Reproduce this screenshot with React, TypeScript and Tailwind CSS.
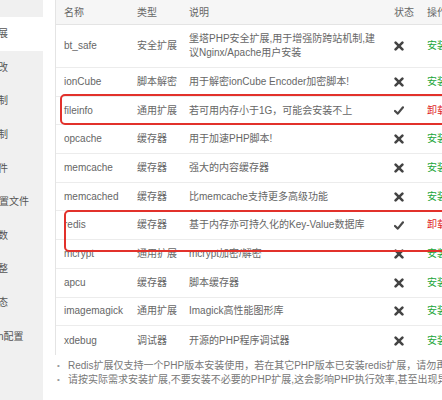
const MENU = [
  "安装扩展",
  "配置修改",
  "上传限制",
  "超时限制",
  "配置文件",
  "FPM配置文件",
  "禁用函数",
  "性能调整",
  "负载状态",
  "Session配置",
];

type Ext = {
  name: string;
  type: string;
  desc: string;
  installed: boolean;
};

const EXTS: Ext[] = [
  { name: "bt_safe", type: "安全扩展", desc: "堡塔PHP安全扩展,用于增强防跨站机制,建议Nginx/Apache用户安装", installed: false },
  { name: "ionCube", type: "脚本解密", desc: "用于解密ionCube Encoder加密脚本!", installed: false },
  { name: "fileinfo", type: "通用扩展", desc: "若可用内存小于1G，可能会安装不上", installed: true },
  { name: "opcache", type: "缓存器", desc: "用于加速PHP脚本!", installed: false },
  { name: "memcache", type: "缓存器", desc: "强大的内容缓存器", installed: false },
  { name: "memcached", type: "缓存器", desc: "比memcache支持更多高级功能", installed: false },
  { name: "redis", type: "缓存器", desc: "基于内存亦可持久化的Key-Value数据库", installed: true },
  { name: "mcrypt", type: "通用扩展", desc: "mcrypt加密/解密", installed: false },
  { name: "apcu", type: "缓存器", desc: "脚本缓存器", installed: false },
  { name: "imagemagick", type: "通用扩展", desc: "Imagick高性能图形库", installed: false },
  { name: "xdebug", type: "调试器", desc: "开源的PHP程序调试器", installed: false },
];

function Cross() {
  return (
    <svg width="10" height="10" viewBox="0 0 10 10" aria-hidden>
      <path d="M1.6 1.6 L8.4 8.4 M8.4 1.6 L1.6 8.4" stroke="#444" strokeWidth="2.6" strokeLinecap="round" />
    </svg>
  );
}

function Check() {
  return (
    <svg width="10" height="9" viewBox="0 0 10 9" aria-hidden>
      <path d="M1 5 L3.8 7.6 L9 1.3" stroke="#4a4a4a" strokeWidth="2.2" fill="none" strokeLinecap="round" strokeLinejoin="round" />
    </svg>
  );
}

export default function App() {
  return (
    <div
      className="relative flex h-[400px] w-[442px] overflow-hidden bg-white text-[10px] text-[#666]"
      style={{ fontFamily: '"Liberation Sans", "Noto Sans CJK SC", sans-serif' }}
    >
      {/* left menu, partly scrolled out */}
      <div className="h-full w-[43px] shrink-0 overflow-hidden bg-[#f0f0f0]">
        <div className="ml-[-32px] w-[75px]">
          <div className="h-[17px]" />
          {MENU.map((m, i) => (
            <div
              key={m}
              className={
                "flex h-[33.6px] items-center whitespace-nowrap text-[10px] text-[#555] " +
                (i === 0 ? "bg-white" : "")
              }
            >
              {m}
            </div>
          ))}
        </div>
      </div>

      <div className="ml-[12px] flex min-w-0 flex-1 flex-col">
        <div className="w-[460px] border-l border-[#e4e4e4]">
          <div className="flex h-[25px] items-center whitespace-nowrap border-b border-[#e4e4e4] bg-[#f6f6f6]">
            <div className="w-[73px] px-2">名称</div>
            <div className="w-[52px] px-2">类型</div>
            <div className="w-[205px] px-2">说明</div>
            <div className="w-[33px] pl-2">状态</div>
            <div className="flex-1 px-2">操作</div>
          </div>
          {EXTS.map((e, i) => (
            <div
              key={e.name}
              className={
                "flex items-center border-b border-[#ececec] leading-[14px] " +
                (i === 0 ? "h-[43px]" : "h-[28.7px]") +
                (i === EXTS.length - 1 ? " border-b-0" : "")
              }
            >
              <div className="w-[73px] px-2">{e.name}</div>
              <div className="w-[52px] whitespace-nowrap px-2">{e.type}</div>
              <div className="w-[205px] px-2">{e.desc}</div>
              <div className="flex w-[33px] pl-2">{e.installed ? <Check /> : <Cross />}</div>
              <div className={"flex-1 whitespace-nowrap px-2 " + (e.installed ? "text-[#e0282a]" : "text-[#20a53a]")}>
                {e.installed ? "卸载" : "安装"}
              </div>
            </div>
          ))}
        </div>

        <ul className="mt-[4px] w-[500px] text-[#777]">
          <li className="flex h-[14px] items-center whitespace-nowrap">
            <span className="w-[13px] pl-[2px] text-[8px] text-[#999]">•</span>
            Redis扩展仅支持一个PHP版本安装使用，若在其它PHP版本已安装redis扩展，请勿再装
          </li>
          <li className="flex h-[14px] items-center whitespace-nowrap">
            <span className="w-[13px] pl-[2px] text-[8px] text-[#999]">•</span>
            请按实际需求安装扩展,不要安装不必要的PHP扩展,这会影响PHP执行效率,甚至出现异常
          </li>
        </ul>
      </div>

      {/* highlight boxes drawn over the table */}
      <div className="pointer-events-none absolute left-[60px] top-[94px] h-[31px] w-[400px] rounded-[5px] border-2 border-[#e2312b]" />
      <div className="pointer-events-none absolute left-[64px] top-[210px] h-[42px] w-[400px] rounded-[5px] border-2 border-[#e2312b]" />
    </div>
  );
}
